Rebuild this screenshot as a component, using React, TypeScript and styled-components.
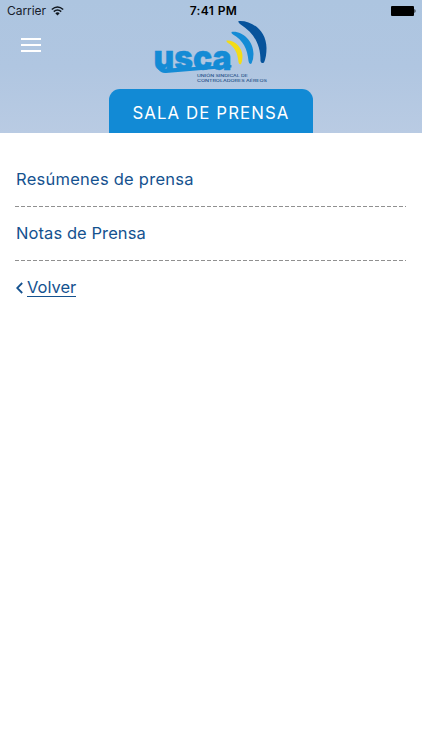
import React from 'react';
import styled, { createGlobalStyle } from 'styled-components';

const GlobalStyle = createGlobalStyle`
  * { box-sizing: border-box; }
  body { margin: 0; background: #fff; font-family: Inter, sans-serif; }
`;

const Screen = styled.div`
  min-height: 750px;
  background: #fff;
`;

const Header = styled.header`
  display: flex;
  flex-direction: column;
  height: 133px;
  background: linear-gradient(180deg, #adc5e0 0%, #b0c6e1 50%, #b9cbe3 100%);
`;

const StatusBar = styled.div`
  display: grid;
  grid-template-columns: 1fr auto 1fr;
  align-items: center;
  height: 20px;
  padding: 2px 6px 0 7px;
  font-size: 12px;
  line-height: 18px;
  color: #000;
`;

const Carrier = styled.span`
  display: flex;
  align-items: center;
  gap: 5px;
  color: #17202b;
  letter-spacing: -0.05px;
`;

const Clock = styled.span`
  font-weight: 600;
  letter-spacing: 0.38px;
  padding-left: 4px;
`;

const BatterySlot = styled.span`
  display: flex;
  justify-content: flex-end;
`;

const NavBar = styled.div`
  display: grid;
  grid-template-columns: 1fr 114px 1fr;
  height: 69px;
`;

const MenuButton = styled.button`
  display: flex;
  flex-direction: column;
  gap: 4px;
  width: 20px;
  margin: 18px 0 0 21px;
  padding: 0;
  border: 0;
  background: none;
  height: 14px;
`;

const MenuLine = styled.span`
  display: block;
  flex: none;
  width: 20px;
  height: 2px;
  background: #fff;
`;

const LogoDrawing = styled.svg`
  display: block;
`;

const Title = styled.h1`
  display: flex;
  align-items: center;
  justify-content: center;
  align-self: center;
  width: 204px;
  height: 44px;
  margin: 0;
  padding-top: 4px;
  border-radius: 11px 11px 0 0;
  background: #128ad5;
  color: #fff;
  font-size: 16.8px;
  font-weight: 400;
  letter-spacing: 1.1px;
  white-space: nowrap;
`;

const List = styled.main`
  padding: 20px 16px 0 15px;
`;

const Row = styled.a`
  display: block;
  height: 54px;
  padding-left: 1px;
  line-height: 53px;
  font-size: 16.5px;
  color: #15528f;
  text-decoration: none;
  white-space: nowrap;
  background: repeating-linear-gradient(90deg, #909090 0 4px, transparent 4px 6px) 0 100% / 100% 1px no-repeat;
`;

const RowLabel = styled.span<{ $spacing: number }>`
  letter-spacing: ${(p) => p.$spacing}px;
`;

const Back = styled.a`
  display: flex;
  align-items: center;
  gap: 4px;
  height: 53px;
  padding-left: 1px;
  color: #15528f;
  font-size: 16.5px;
`;

const BackLabel = styled.span`
  line-height: 18px;
  border-bottom: 1px solid #15528f;
`;

function Wifi() {
  return (
    <svg width="13" height="10" viewBox="0 0 13 10" fill="none" stroke="#111820" strokeWidth="1.6">
      <path d="M.8 3.5Q6.5-1.5 12.2 3.5M2.8 5.6Q6.5 2.4 10.2 5.6" />
      <path d="M4.3 7.2Q6.5 5.5 8.7 7.2L6.5 9.6Z" fill="#111820" stroke="none" />
    </svg>
  );
}

function Battery() {
  return (
    <svg width="25" height="10" viewBox="0 0 25 10">
      <rect x="0" y="0" width="23" height="10" rx="1" />
      <path d="M23.5 3.3h.5q1 1.7 0 3.4h-.5z" />
    </svg>
  );
}

function Logo() {
  return (
    <LogoDrawing width="114" height="69" viewBox="154 20 114 69" role="img" aria-label="USCA">
      <path d="M238.5 21C252 20 266.500 31 266.500 48Q266.500 57 264 62.500Q261 64 260.500 61C260.500 44 254 33 240 24Q238 22.500 238.500 21Z" fill="#07539b" />
      <path d="M231.500 32C242 30.500 253.500 41 253.500 54Q253.500 60 251.500 63.500Q249 65 248.500 61C247.500 49 243 40 233 34.500Q231 33 231.500 32Z" fill="#148bd5" />
      <path d="M226.500 40.500C235 40 242.500 48 242.500 56Q242.500 61 241 64Q239 65 238.500 62C237.500 53 235 47 228 43Q226 41.500 226.500 40.500Z" fill="#f3dc16" />
      <path d="M158 69L231.500 65V67.500L166 73Q161 73.500 158 69Z" fill="#148bd5" />
      <text x="153.5" y="69.5" fontFamily="Inter" fontWeight="900" fontSize="35" textLength="78" lengthAdjust="spacingAndGlyphs" fill="#148bd5" stroke="#148bd5" strokeWidth=".4">usca</text>
      <g fill="#244f86" fontFamily="Inter" fontWeight="500" fontSize="3.4">
        <text x="197" y="77.4" textLength="51" lengthAdjust="spacingAndGlyphs">UNIÓN SINDICAL DE</text>
        <text x="197" y="81.7" textLength="70" lengthAdjust="spacingAndGlyphs">CONTROLADORES AÉREOS</text>
      </g>
    </LogoDrawing>
  );
}

export default function App() {
  return (
    <Screen>
      <GlobalStyle />
      <Header>
        <StatusBar>
          <Carrier>Carrier <Wifi /></Carrier>
          <Clock>7:41 PM</Clock>
          <BatterySlot><Battery /></BatterySlot>
        </StatusBar>
        <NavBar>
          <MenuButton aria-label="Menú"><MenuLine /><MenuLine /><MenuLine /></MenuButton>
          <Logo />
        </NavBar>
        <Title>SALA DE PRENSA</Title>
      </Header>
      <List>
        <Row><RowLabel $spacing={0.25}>Resúmenes de prensa</RowLabel></Row>
        <Row><RowLabel $spacing={0.08}>Notas de Prensa</RowLabel></Row>
        <Back>
          <svg width="7" height="12" viewBox="0 0 7 12" fill="none" stroke="#15528f" strokeWidth="1.8"><path d="M6.2 1L1.2 6l5 5" /></svg>
          <BackLabel>Volver</BackLabel>
        </Back>
      </List>
    </Screen>
  );
}
